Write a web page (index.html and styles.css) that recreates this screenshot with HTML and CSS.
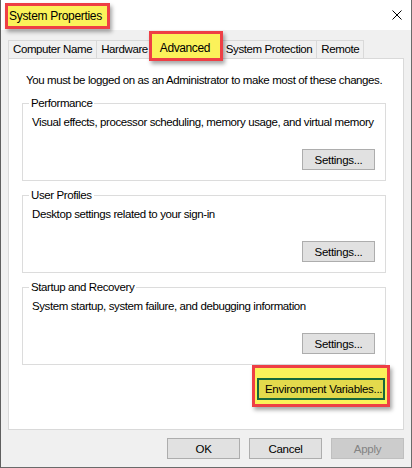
FILE: index.html
```html
<!DOCTYPE html>
<html lang="en">

<head>
  <meta charset="UTF-8">
  <meta name="viewport" content="width=device-width, initial-scale=1.0">
  <title>System Properties</title>

  <link rel="stylesheet" href="styles.css">
</head>

<body>
  <div class="window">
    <div class="titlebar">
      <span class="title mark">System Properties</span>
      <svg class="close" width="10" height="10" viewBox="0 0 10 10">
        <path d="M0.5 0.5 L9.5 9.5 M9.5 0.5 L0.5 9.5" stroke="#000" stroke-width="1" fill="none" />
      </svg>
    </div>
    <div class="body">
      <div class="tabs">
        <div class="tab">Computer Name</div>
        <div class="tab">Hardware</div>
        <div class="tab active mark">Advanced</div>
        <div class="tab">System Protection</div>
        <div class="tab">Remote</div>
      </div>
      <div class="panel">
        <p class="note">You must be logged on as an Administrator to make most of these changes.</p>
        <fieldset class="group">
          <legend>Performance</legend>
          <p>Visual effects, processor scheduling, memory usage, and virtual memory</p>
          <div class="group-btns">
            <button class="btn">Settings...</button>
          </div>
        </fieldset>
        <fieldset class="group">
          <legend>User Profiles</legend>
          <p>Desktop settings related to your sign-in</p>
          <div class="group-btns">
            <button class="btn">Settings...</button>
          </div>
        </fieldset>
        <fieldset class="group">
          <legend>Startup and Recovery</legend>
          <p>System startup, system failure, and debugging information</p>
          <div class="group-btns">
            <button class="btn">Settings...</button>
          </div>
        </fieldset>
        <div class="env-wrap">
          <div class="env-mark">
            <button class="btn env">Environment Variables...</button>
          </div>
        </div>
      </div>
      <div class="actions">
        <button class="btn">OK</button>
        <button class="btn">Cancel</button>
        <button class="btn" disabled>Apply</button>
      </div>
    </div>
  </div>
</body>

</html>
```

FILE: styles.css
```css
* {
  margin: 0;
  padding: 0;
  box-sizing: border-box;
}

body {
  width: 412px;
  height: 468px;
  background: #f0f0f0;
  font-family: "Liberation Sans", Arial, sans-serif;
  font-size: 11.5px;
  letter-spacing: -0.4px;
  color: #000;
  white-space: nowrap;
}

.window {
  width: 412px;
  height: 468px;
  display: flex;
  flex-direction: column;
  border-left: 1px solid #5f5f5f;
  border-right: 1px solid #6a6a6a;
  border-bottom: 1px solid #6a6a6a;
}

/* yellow marker + red box used for the annotations */
.mark {
  background: #fbf25a;
  border: 3px solid #ee3f45;
  box-shadow: 2px 3px 4px rgba(0, 0, 0, 0.35);
}

.titlebar {
  height: 30px;
  background: #fff;
  display: flex;
  align-items: flex-start;
  justify-content: space-between;
}

.title {
  margin-top: 3px;
  margin-left: 4px;
  width: 105px;
  height: 26px;
  padding-left: 1px;
  font-size: 12px;
  letter-spacing: -0.3px;
  line-height: 20px;
}

.close {
  margin-top: 10px;
  margin-right: 9px;
}

.body {
  flex: 1;
  display: flex;
  flex-direction: column;
}

.tabs {
  display: flex;
  align-items: flex-end;
  height: 28px;
  padding-left: 7px;
}

.tab {
  height: 18px;
  line-height: 16px;
  padding: 0 4px;
  border: 1px solid #d9d9d9;
  border-bottom: none;
  margin-right: -1px;
  background: #f0f0f0;
}

.tab.active {
  position: relative;
  z-index: 1;
  width: 74px;
  height: 30px;
  margin-bottom: -3px;
  margin-left: -3px;
  margin-right: -2px;
  padding: 4px 0 0 8px;
  line-height: 20px;
  font-size: 12px;
  border: 3px solid #ee3f45;
  background: #fbf25a;
}

.panel {
  width: 396px;
  height: 372px;
  margin-left: 7px;
  background: #fff;
  border: 1px solid #d9d9d9;
  padding-top: 13px;
}

.note {
  line-height: 16px;
  padding-left: 17px;
  margin-bottom: 8px;
}

.group {
  margin: 0 17px 7px 13px;
  border: 1px solid #dcdcdc;
  padding: 0 10px 10px 9px;
}

.group legend {
  line-height: 14px;
  padding: 0 2px;
  margin-left: -3px;
}

.group p {
  line-height: 16px;
  margin-top: 4px;
}

.group-btns {
  display: flex;
  justify-content: flex-end;
  margin-top: 19px;
}

.btn {
  width: 73px;
  height: 21px;
  font-family: inherit;
  font-size: 11.5px;
  letter-spacing: -0.3px;
  color: #000;
  background: #e1e1e1;
  border: 1px solid #adadad;
}

.btn:disabled {
  background: #cccccc;
  border-color: #bfbfbf;
  color: #838383;
}

.env-wrap {
  display: flex;
  justify-content: flex-end;
  padding-right: 13px;
  margin-top: -7px;
}

.env-mark {
  width: 138px;
  height: 42px;
  padding: 10px 2px 3px 2px;
  background: #fbf25a;
  border: 3px solid #ee3f45;
  box-shadow: 2px 3px 4px rgba(0, 0, 0, 0.35);
}

.btn.env {
  width: 128px;
  height: 22px;
  background: #e3da4c;
  border: 2px solid #17683b;
  text-align: left;
  padding-left: 6px;
}

.actions {
  display: flex;
  justify-content: flex-end;
  gap: 9px;
  margin-top: 8px;
  padding-right: 7px;
}
```
